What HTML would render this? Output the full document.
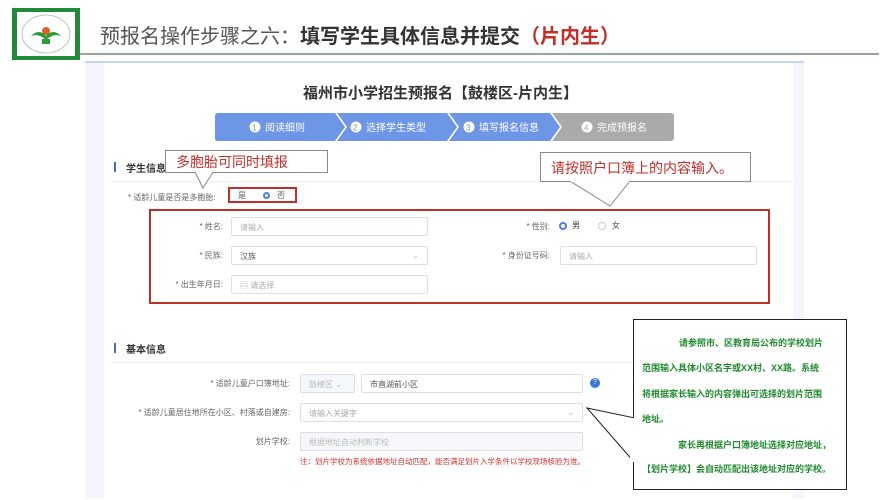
<!DOCTYPE html>
<html><head><meta charset="utf-8"><style>
*{margin:0;padding:0;box-sizing:border-box}
body{width:889px;height:500px;background:#fff;position:relative;overflow:hidden;font-family:"Liberation Sans","Noto Sans CJK SC",sans-serif;color:#333}
.a{position:absolute}
.lbl{position:absolute;font-size:8px;color:#666;text-align:right;white-space:nowrap}
.in{position:absolute;border:1px solid #dcdfe6;background:#fff;height:19px;font-size:8px;color:#aaa;padding:4px 8px;border-radius:2px}
.g{font-size:9px;color:#1e8a2e;font-weight:bold;position:absolute;white-space:nowrap}
</style></head><body>
<!-- logo -->
<div class="a" style="left:12px;top:8px;width:68px;height:52px;background:#1f8a3a"></div>
<div class="a" style="left:17px;top:12px;width:58px;height:44px;background:#fff"></div>
<svg class="a" style="left:17px;top:12px" width="58" height="44" viewBox="0 0 58 44">
<ellipse cx="29" cy="22" rx="24" ry="19" fill="none" stroke="#9bc3a0" stroke-width="0.8"/>
<circle cx="29" cy="19" r="4" fill="#e0602a"/>
<path d="M14 24 Q22 16 29 24 Q36 16 44 24 Q36 21 29 28 Q22 21 14 24Z" fill="#2a9a3a"/>
<path d="M25 27 h8 v5 h-8z" fill="#2a9a3a"/>
</svg>
<div class="a" style="left:100px;top:20px;font-size:20px;color:#555;white-space:nowrap">预报名操作步骤之六：<b style="color:#333">填写学生具体信息并提交</b><b style="color:#c0302a">（片内生）</b></div>
<div class="a" style="left:80px;top:53px;width:799px;height:2px;background:#9aa59a"></div>
<!-- panel -->
<div class="a" style="left:85px;top:61px;width:719px;height:437px;background:#f4f6fb;border-top:2px solid #c8d4ef"></div>
<div class="a" style="left:104px;top:63px;width:689px;height:435px;background:#fff"></div>
<div class="a" style="left:0;top:82px;width:889px;text-align:center;font-size:15px;font-weight:bold;color:#333;padding-left:0px"><span style="margin-left:-8px">福州市小学招生预报名【鼓楼区-片内生】</span></div>
<!-- steps -->
<svg class="a" style="left:215px;top:113px" width="460" height="30">
<path d="M3 0 H120 L130 14 L120 28 H3 Q0 28 0 25 V3 Q0 0 3 0Z" fill="#6d96e6"/>
<path d="M122 0 H232 L242 14 L232 28 H122 L132 14Z" fill="#6d96e6"/>
<path d="M234 0 H335 L345 14 L335 28 H234 L244 14Z" fill="#6d96e6"/>
<path d="M337 0 H455 Q459 0 459 3 V25 Q459 28 455 28 H337 L347 14Z" fill="#aaaaaa"/>
<g font-size="10" fill="#fff" font-family="Liberation Sans,Noto Sans CJK SC,sans-serif">
<circle cx="40" cy="14" r="5.5" fill="#fff"/><text x="37" y="17.5" font-size="8" fill="#6d96e6">1</text><text x="50" y="18">阅读细则</text>
<circle cx="141" cy="14" r="5.5" fill="#fff"/><text x="138" y="17.5" font-size="8" fill="#6d96e6">2</text><text x="151" y="18">选择学生类型</text>
<circle cx="254" cy="14" r="5.5" fill="#fff"/><text x="251" y="17.5" font-size="8" fill="#6d96e6">3</text><text x="264" y="18">填写报名信息</text>
<circle cx="372" cy="14" r="5.5" fill="#fff"/><text x="369" y="17.5" font-size="8" fill="#aaa">4</text><text x="382" y="18">完成预报名</text>
</g></svg>
<!-- 学生信息 -->
<div class="a" style="left:114px;top:162px;width:2px;height:10px;background:#4a6fb0"></div>
<div class="a" style="left:126px;top:160px;font-size:10px;font-weight:bold;color:#333">学生信息</div>
<div class="a" style="left:110px;top:181px;width:683px;height:1px;background:#eee"></div>
<!-- callout 1 -->
<div class="a" style="left:165px;top:150px;width:163px;height:23px;border:1px solid #888;background:#fff;font-size:14px;color:#c0302a;padding:1px 0 0 10px">多胞胎可同时填报</div>
<svg class="a" style="left:195px;top:172px" width="30" height="18"><path d="M0 0 L8 16 L18 0" fill="#fff" stroke="#888"/><path d="M1 0 H17" stroke="#fff" stroke-width="2"/></svg>
<div class="a" style="left:540px;top:152px;width:211px;height:30px;border:1px solid #888;background:#fff;font-size:14px;color:#c0302a;padding:5px 0 0 10px">请按照户口簿上的内容输入。</div>
<svg class="a" style="left:570px;top:181px" width="70" height="28"><path d="M0 0 L40 25 L60 0" fill="#fff" stroke="#888"/><path d="M1 0 H59" stroke="#fff" stroke-width="2"/></svg>
<div class="lbl" style="left:128px;top:192px">* 适龄儿童是否是多胞胎:</div>
<div class="a" style="left:228px;top:187px;width:69px;height:16px;border:2px solid #c0302a"></div>
<div class="a" style="left:238px;top:190px;font-size:8px;color:#555">是</div>
<div class="a" style="left:263px;top:192px;width:7px;height:7px;border-radius:50%;border:2px solid #4d7fe0"></div>
<div class="a" style="left:277px;top:190px;font-size:8px;color:#555">否</div>
<!-- red box -->
<div class="a" style="left:149px;top:209px;width:621px;height:95px;border:2px solid #c0302a"></div>
<div class="lbl" style="left:178px;top:221px;width:45px">* 姓名:</div>
<div class="in" style="left:231px;top:217px;width:197px">请输入</div>
<div class="lbl" style="left:510px;top:221px;width:40px">* 性别:</div>
<div class="a" style="left:559px;top:222px;width:8px;height:8px;border-radius:50%;border:2.5px solid #4d7fe0"></div>
<div class="a" style="left:572px;top:220px;font-size:8px;color:#333">男</div>
<div class="a" style="left:598px;top:222px;width:8px;height:8px;border-radius:50%;border:1px solid #ccc"></div>
<div class="a" style="left:612px;top:220px;font-size:8px;color:#555">女</div>
<div class="lbl" style="left:178px;top:250px;width:45px">* 民族:</div>
<div class="in" style="left:231px;top:246px;width:197px;color:#555">汉族<span style="float:right;color:#bbb">⌄</span></div>
<div class="lbl" style="left:490px;top:250px;width:60px">* 身份证号码:</div>
<div class="in" style="left:560px;top:246px;width:197px">请输入</div>
<div class="lbl" style="left:160px;top:279px;width:63px">* 出生年月日:</div>
<div class="in" style="left:231px;top:275px;width:197px">▤ 请选择</div>
<!-- 基本信息 -->
<div class="a" style="left:114px;top:343px;width:2px;height:10px;background:#4a6fb0"></div>
<div class="a" style="left:126px;top:341px;font-size:10px;font-weight:bold;color:#333">基本信息</div>
<div class="a" style="left:110px;top:362px;width:683px;height:1px;background:#eee"></div>
<div class="lbl" style="left:180px;top:378px;width:110px">* 适龄儿童户口簿地址:</div>
<div class="in" style="left:300px;top:374px;width:55px;background:#f5f7fa;color:#bbb">鼓楼区 ⌄</div>
<div class="in" style="left:361px;top:374px;width:222px;color:#555">市直湖前小区</div>
<div class="a" style="left:590px;top:378px;width:10px;height:10px;border-radius:50%;background:#3a78d8;color:#fff;font-size:7px;text-align:center;line-height:10px">?</div>
<div class="lbl" style="left:120px;top:407px;width:170px">* 适龄儿童居住地所在小区、村落或自建房:</div>
<div class="in" style="left:300px;top:403px;width:283px">请输入关键字<span style="float:right;color:#bbb">⌄</span></div>
<div class="lbl" style="left:230px;top:436px;width:60px">划片学校:</div>
<div class="in" style="left:300px;top:432px;width:283px;background:#f5f7fa;color:#bbb">根据地址自动判断学校</div>
<div class="a" style="left:300px;top:456px;font-size:7.5px;color:#d0302a;white-space:nowrap">注：划片学校为系统依据地址自动匹配，能否满足划片入学条件以学校现场核验为准。</div>
<!-- callout green -->
<svg class="a" style="left:580px;top:400px" width="60" height="70"><path d="M7 8 L55 18 L55 63Z" fill="#fff" stroke="#222"/></svg>
<div class="a" style="left:633px;top:319px;width:214px;height:171px;border:1.5px solid #222;background:#fff"></div>
<svg class="a" style="left:630px;top:415px" width="6" height="50"><rect x="0" y="3" width="5" height="44" fill="#fff"/></svg>
<div class="g" style="left:679px;top:336px">请参照市、区教育局公布的学校划片</div>
<div class="g" style="left:642px;top:361px">范围输入具体小区名字或XX村、XX路。系统</div>
<div class="g" style="left:642px;top:387px">将根据家长输入的内容弹出可选择的划片范围</div>
<div class="g" style="left:642px;top:412px">地址。</div>
<div class="g" style="left:678px;top:438px">家长再根据户口簿地址选择对应地址，</div>
<div class="g" style="left:642px;top:462px">【划片学校】会自动匹配出该地址对应的学校。</div>
</body></html>
